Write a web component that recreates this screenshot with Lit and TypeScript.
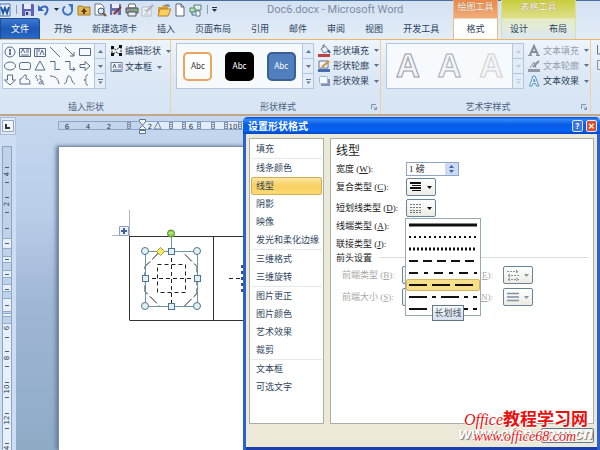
import { LitElement, html, svg, css } from "lit";
import { customElement } from "lit/decorators.js";
import { classMap } from "lit/directives/class-map.js";

const base = css`
  :host {
    display: block;
    box-sizing: border-box;
    font-family: "Noto Sans", "Noto Sans CJK SC", sans-serif;
    font-size: 9px;
    line-height: 12px;
    color: #2b3f5c;
  }
  * { box-sizing: border-box; }
  button {
    font: inherit;
    color: inherit;
    background: none;
    border: 0;
    padding: 0;
    margin: 0;
    white-space: nowrap;
  }
  svg { display: block; flex: none; }
`;

const arrow = html`<svg width="5" height="3" viewBox="0 0 5 3"><path d="M0 0h5L2.500 3z" fill="currentColor" /></svg>`;

/* ---------- title bar ---------- */

const quickIcons: Array<[string, unknown]> = [
  ["保存", svg`<path d="M1 1h11l1 1v11H1z" fill="#5b62b5"/><path d="M3 1h7v5H3z" fill="#e8ecfa"/><path d="M4 8h6v5H4z" fill="#c9cde6"/><path d="M5 9h2v3H5z" fill="#333a80"/>`],
  ["撤消", svg`<path d="M1 2v6h6z" fill="#3c68b8"/><path d="M3 6C6 2 11 3 10.500 7 10 9.500 9 11 7.500 12" fill="none" stroke="#3c68b8" stroke-width="2"/>`],
  ["重复", svg`<path d="M10.500 5A4.500 4.500 0 1 1 4 3.500" fill="none" stroke="#3b74c0" stroke-width="2"/><path d="M7 1h5v6z" fill="#3b74c0"/>`],
  ["文件夹", svg`<path d="M1 3h4l1 1h7v8H1z" fill="#e2b951" stroke="#a27c2a"/><path d="m7 5 3 4H8v2H6V9H4z" fill="#5a3d1c"/>`],
  ["打印预览", svg`<path d="M2 1h6l3 3v8H2z" fill="#fff" stroke="#66758c"/><circle cx="8" cy="8" r="3" fill="#d6e8f8" stroke="#4a5568"/><path d="m10 10 3 3" stroke="#7b4a28" stroke-width="2"/>`],
  ["另存为", svg`<path d="M1 1h11v11H1z" fill="#6a6fae"/><path d="M3 1h7v4H3z" fill="#eef"/><path d="M3 8h6v4H3z" fill="#d2c5cf"/><path d="m5 11 7-7" stroke="#7a3535" stroke-width="2"/>`],
  ["打印", svg`<path d="M4 1h6l1 4H3z" fill="#fff" stroke="#666"/><path d="M1 5h12v5H1z" fill="#8d949b" stroke="#555"/><path d="M3 9h8v4H3z" fill="#e6eef2" stroke="#555"/><path d="M9 7h3" stroke="#71c24f" stroke-width="2"/>`],
  ["编辑", svg`<path d="M1 4h9v9H1z" fill="#eef1f4" stroke="#b4bcc6"/><path d="m5 9 7-7" stroke="#a8b0ba" stroke-width="2"/><path d="M3 7h4M3 11h5" stroke="#bcc4ce"/>`],
  ["打开", svg`<path d="M1 4h4l1-2h5v10H1z" fill="#d9a13b"/><path d="M3 6h11l-3 7H1z" fill="#f7cf62" stroke="#b5802a"/><path d="M8 2h4v2" fill="none" stroke="#3973b8"/>`],
  ["新建", svg`<path d="M3 1h5l3 3v9H3z" fill="#fff" stroke="#56657c"/><path d="M8 1v3h3" fill="none" stroke="#56657c"/>`],
  ["更改形状", svg`<path d="M5 2h7v5H5z" fill="#dff0e2" stroke="#5a7a8c"/><path d="M1 5h5v4H1z" fill="#bfe0c2" stroke="#4b8a5a"/><path d="M7 8h4v5H7z" fill="#fff" stroke="#5a7a8c"/><path d="M3 9v3h3" fill="none" stroke="#44688a"/>`],
];

@customElement("word-titlebar")
class WordTitlebar extends LitElement {
  static styles = [base, css`
    :host { border-top: 1px solid #47719f; height: 18px; }
    .bar { display: flex; align-items: center; height: 17px; gap: 2px; }
    .quick { display: flex; align-items: center; gap: 2px; width: 265px; flex: none; }
    .quick button { display: flex; align-items: center; gap: 3px; color: #1d2e48; }
    .sep { width: 1px; height: 9px; background: #8a9db8; margin: 0 2px; }
    .custom { border-top: 1px solid #1d2e48; padding-top: 1px; }
    .title { margin: 0; font-family: Roboto, sans-serif; font-size: 11px; font-weight: 400; line-height: 14px; color: #7d8da4; white-space: nowrap; }
  `];
  render() {
    return html`<header class="bar">
      <div class="quick">
        <svg width="12" height="14" viewBox="0 0 12 14"><path d="M0 1h10v12H0z" fill="#e9f1fb" stroke="#4b77b4"/><path d="m1 4 2 6 2-5 2 5 2-6" fill="none" stroke="#1f55a5" stroke-width="2"/></svg>
        <span class="sep"></span>
        ${quickIcons.map(([name, art], i) => html`<button aria-label=${name}>
          <svg width="14" height="14" viewBox="0 0 14 14">${art}</svg>${i === 1 ? arrow : ""}</button>`)}
        <span class="sep"></span>
        <button class="custom" aria-label="自定义快速访问工具栏">${arrow}</button>
      </div>
      <h1 class="title">Doc6.docx - Microsoft Word</h1>
    </header>`;
  }
}

/* ---------- tab strip ---------- */

@customElement("word-tabs")
class WordTabs extends LitElement {
  static styles = [base, css`
    :host { height: 21px; margin-right: 24px; }
    .strip { display: flex; height: 21px; align-items: stretch; }
    .file { width: 40px; background: linear-gradient(#3d7ad2, #1d58b4 50%, #2a6bc8); color: #fff; border: 1px solid #1c4b98; border-bottom: 0; border-radius: 0 3px 0 0; }
    .main { display: flex; flex: 1; gap: 20px; padding-left: 14px; }
    .context { display: flex; position: relative; gap: 21px; justify-content: center; margin-top: -18px; padding-top: 18px; }
    .context .name { position: absolute; top: 0; left: 0; right: 0; height: 13px; text-align: center; color: #fff; text-shadow: 0 0 1px #8a5a20; line-height: 13px; }
    .draw { width: 45px; background: linear-gradient(#e98a4a, #f0ae7c 18px, #fff 19px); border: 1px solid #eab98c; border-width: 0 1px; margin-right: 3px; }
    .table { width: 75px; background: linear-gradient(#c8cc3c, #dfe08a 18px, #e6edc8 19px, #dbe7f2); border: 1px solid #dcdf9e; border-width: 0 1px; }
  `];
  render() {
    const tabs = ["开始", "新建选项卡", "插入", "页面布局", "引用", "邮件", "审阅", "视图", "开发工具"];
    return html`<nav class="strip">
      <button class="file">文件</button>
      <div class="main">${tabs.map((t) => html`<button>${t}</button>`)}</div>
      <div class="context draw"><span class="name">绘图工具</span><button>格式</button></div>
      <div class="context table"><span class="name">表格工具</span><button>设计</button><button>布局</button></div>
    </nav>`;
  }
}

/* ---------- ribbon ---------- */

const shapes = [
  svg`<circle cx="7" cy="7" r="5"/><path d="M7 4v6M6 5h2M6 9h2" stroke-width="1.500"/>`,
  svg`<path d="M1.500 3.500h11v8h-11z"/><path d="m3 8 2-4 2 4M8 5h3M8 7h3M3 10h8"/>`,
  svg`<path d="M1.500 3.500h11v8h-11zM4 4v7M6 4v3"/><path d="m7 10 2-5 2 5"/>`,
  svg`<path d="m2 2 10 10"/>`,
  svg`<path d="m2 2 9 9M11 7v4H7"/>`,
  svg`<path d="M1.500 3.500h11v7h-11z"/>`,
  svg`<ellipse cx="7" cy="7" rx="5.500" ry="4"/>`,
  svg`<rect x="1.500" y="3.500" width="11" height="7" rx="2"/>`,
  svg`<path d="m7 2 5 9H2z"/>`,
  svg`<path d="M2 2.500h5v8h5"/>`,
  svg`<path d="M2 2.500h5v8h5M10 8l2 2.500-2 2"/>`,
  svg`<path d="M2 5.500h5v-3l5 4.500-5 4.500v-3H2z"/>`,
  svg`<path d="M4.500 2h5v5h3L7 12 1.500 7h3z"/>`,
  svg`<path d="M2 11V6c4 0 2-4 6-4 1 3-1 3 0 4 3 0 4 1 4 5z"/>`,
  svg`<path d="M4 2c-4 3 3 3 0 6M6 3c6 0-2 3 2 4s1 4-1 4-1-3 2-2l2 3"/>`,
  svg`<path d="M2 3c6 0 8 3 9 8"/>`,
  svg`<path d="M1 11C5 10 3 3 6 3s2 7 6 8"/>`,
  svg`<path d="M10 2C7 2 8 4 8 5s0 2-2 2c2 0 2 1 2 2s-1 3 2 3"/>`,
];

@customElement("ribbon-scroll")
class RibbonScroll extends LitElement {
  static styles = [base, css`
    :host { width: 11px; flex: none; align-self: stretch; border-left: 1px solid #b3c6df; color: #5d7391; }
    :host([faint]) { color: #c0ccda; }
    .col { display: flex; flex-direction: column; height: 100%; }
    button { flex: 1; display: flex; align-items: center; justify-content: center; background: #e3edf8; border-bottom: 1px solid #b3c6df; }
    button:last-child { border-bottom: 0; }
    .up svg { rotate: 180deg; }
    .more svg { border-top: 1px solid currentColor; height: 5px; }
  `];
  render() {
    return html`<div class="col">
      <button class="up" aria-label="上一行">${arrow}</button>
      <button class="down" aria-label="下一行">${arrow}</button>
      <button class="more" aria-label="其他"><svg width="5" height="5" viewBox="0 -2 5 5"><path d="M0 0h5L2.500 3z" fill="currentColor"/></svg></button>
    </div>`;
  }
}

type Cmd = { label: string; icon: unknown; off?: boolean };

const editCmds: Cmd[] = [
  { label: "编辑形状", icon: svg`<path d="M2 3.500 6 6l5-4v9L6 8l-4 3z" fill="none" stroke="#222" stroke-dasharray="2 1"/><path d="M1 2h3v3H1zM9 1h3v3H9zM1 9h3v3H1zM9 9h3v3H9z" fill="#111"/>` },
  { label: "文本框", icon: svg`<path d="M1 2.500h11v9H1z" fill="#eef4fb" stroke="#6b7e98"/><path d="m3 8 1.500-4L6 8M8 5h3M8 7h3M3 10h8" fill="none" stroke="#4a5f80"/>` },
];
const styleCmds: Cmd[] = [
  { label: "形状填充", icon: svg`<path d="m3 5 4-3 4 5-5 2z" fill="#eef2f8" stroke="#66768f"/><path d="M5 4V1h2" fill="none" stroke="#66768f"/><path d="m10 6 2 3" stroke="#2d5ea8" stroke-width="2"/><path d="M0 10h12v3H0z" fill="#c0403c"/>` },
  { label: "形状轮廓", icon: svg`<path d="M1 2h9v7H1z" fill="#f4f7fb" stroke="#66768f"/><path d="m4 8 7-6" stroke="#d88b30" stroke-width="2"/><path d="M0 10h12v3H0z" fill="#456fae"/>` },
  { label: "形状效果", icon: svg`<path d="M3 5h9v7H3z" fill="#8293b5"/><rect x="1.500" y="2.500" width="8" height="7" rx="1" fill="#f5f8fc" stroke="#a5b6d0"/>` },
];
const textCmds: Cmd[] = [
  { label: "文本填充", off: true, icon: svg`<path d="m2 11 4-9 4 9M3 8h6" fill="none" stroke="#8490a0" stroke-width="2"/><path d="M0 11.500h4m4 0h4" stroke="#8490a0"/>` },
  { label: "文本轮廓", off: true, icon: svg`<path d="m2 9 4-6 2 6" fill="none" stroke="#8f99a6"/><path d="m5 8 6-6" stroke="#858f9c" stroke-width="2"/><path d="M0 10h12v3H0z" fill="#8f99a6"/>` },
  { label: "文本效果", icon: svg`<path d="m1.500 12 3.500-10h2L11 12H8.500l-.8-2.500H5L4 12zM5.500 7.500h1.600L6.300 5z" fill="#e4f2fc" stroke="#5793c4"/>` },
];

@customElement("word-ribbon")
class WordRibbon extends LitElement {
  static styles = [base, css`
    :host { height: 77px; border-top: 1px solid #eab66c; border-bottom: 2px solid #c3a58a; background: linear-gradient(#eef4fb, #dce8f5 50%, #d6e4f4); overflow: hidden; }
    .row { display: flex; height: 100%; }
    .group { display: flex; flex-direction: column; flex: none; border-right: 1px solid #efcf9f; padding: 3px 0 0 2px; height: 100%; }
    .insert { width: 171px; }
    .styles, .art { width: 210px; padding-left: 5px; }
    .tools { display: flex; height: 46px; }
    .gallery { display: flex; border: 1px solid #b3c6df; background: #f7fafd; flex: none; height: 46px; }
    .shapes { display: grid; grid-template-columns: repeat(6, 15px); grid-template-rows: repeat(3, 14px); width: 91px; padding-top: 1px; }
    .shapes svg { fill: none; stroke: #566a86; }
    .swatches { display: flex; align-items: center; justify-content: space-around; width: 125px; }
    .swatch { width: 29px; height: 29px; border-radius: 5px; border: 2px solid #000; background: #000; color: #fff; font-size: 8px; line-height: 20px; text-align: center; }
    .orange { border-color: #eda45e; background: #fff; color: #333; }
    .blue { border-color: #3a5f92; background: #4f7fbd; }
    .letter { font-family: "Liberation Sans", sans-serif; font-weight: 700; font-size: 33px; line-height: 40px; color: #f4f4f6; -webkit-text-stroke: 1px #949cab; }
    .l2 { -webkit-text-stroke-color: #a6adba; }
    .l3 { -webkit-text-stroke-color: #cfd1d6; }
    .cmds { display: flex; flex-direction: column; padding-left: 4px; }
    .cmd { display: flex; align-items: center; height: 16px; gap: 2px; }
    .cmd > svg:last-child { margin-left: 3px; color: #5d7391; }
    .off { color: #93a0b2; }
    .foot { display: flex; flex: 1; align-items: center; justify-content: center; position: relative; padding-top: 10px; color: #4d607d; }
    .launch { position: absolute; right: 3px; bottom: 4px; }
    .rest { display: flex; flex-direction: column; gap: 5px; padding: 5px 0 0 5px; flex: 1; }
  `];
  cmds(list: Cmd[]) {
    return html`<div class="cmds">${list.map((c) => html`<button class=${classMap({ cmd: true, off: !!c.off })} ?disabled=${c.off}>
      <svg width="13" height="14" viewBox="0 0 13 14">${c.icon}</svg><span>${c.label}</span>${arrow}</button>`)}</div>`;
  }
  foot(name: string, launch = true) {
    return html`<div class="foot"><span>${name}</span>${launch ? html`<button class="launch" aria-label=${name + "选项"}>
      <svg width="6" height="6" viewBox="0 0 6 6"><path d="M.5 5V.5H5M2.500 2.500 5.500 5.500M5.500 3v2.500H3" fill="none" stroke="#7f93ae"/></svg></button>` : ""}</div>`;
  }
  render() {
    return html`<div class="row">
      <section class="group insert">
        <div class="tools">
          <div class="gallery"><div class="shapes">${shapes.map((s) => html`<svg width="14" height="14" viewBox="0 0 14 14">${s}</svg>`)}</div><ribbon-scroll></ribbon-scroll></div>
          ${this.cmds(editCmds)}
        </div>
        ${this.foot("插入形状", false)}
      </section>
      <section class="group styles">
        <div class="tools">
          <div class="gallery"><div class="swatches">
            <button class="swatch orange">Abc</button><button class="swatch">Abc</button><button class="swatch blue">Abc</button>
          </div><ribbon-scroll></ribbon-scroll></div>
          ${this.cmds(styleCmds)}
        </div>
        ${this.foot("形状样式")}
      </section>
      <section class="group art">
        <div class="tools">
          <div class="gallery"><div class="swatches">
            <span class="letter">A</span><span class="letter l2">A</span><span class="letter l3">A</span>
          </div><ribbon-scroll faint></ribbon-scroll></div>
          ${this.cmds(textCmds)}
        </div>
        ${this.foot("艺术字样式")}
      </section>
      <div class="rest">
        <svg width="12" height="10" viewBox="0 0 12 10"><path d="M1.500 0v9H12M4 6h8" fill="none" stroke="#5d7391"/></svg>
        <svg width="12" height="10" viewBox="0 0 12 10"><path d="M1.500.5H12M1.500.5v9H12M4 5h8" fill="none" stroke="#8594aa"/></svg>
      </div>
    </div>`;
  }
}

/* ---------- document area ---------- */

@customElement("word-document")
class WordDocument extends LitElement {
  static styles = [base, css`
    :host { flex: 1; min-height: 0; overflow: hidden; background: linear-gradient(#c6d8ef, #b9cde8 30%, #a0b7d6 55%, #8eabc6); }
    .frame { display: grid; grid-template-columns: 16px 42px 1fr; grid-template-rows: 30px 1fr; height: 100%; }
    .side { background: #cdddf2; overflow: hidden; }
    .corner { display: flex; align-items: center; justify-content: center; width: 16px; height: 18px; margin-top: 1px; border: 1px solid #a9bdd8; background: #dfe9f6; }
    .page { background: #fff; border: 1px solid #7d8da5; border-width: 1px 0 0 1px; box-shadow: -2px 0 4px #63789a; overflow: hidden; }
    text { font-family: "DejaVu Sans", sans-serif; font-size: 7px; fill: #28364d; text-anchor: middle; }
  `];
  render() {
    const marks = [129, 171, 184, 199, 213, 226, 240];
    const hnum: Array<[number, string]> = [[67, "6"], [88, "4"], [109, "2"], [150, "2"], [191, "6"], [233, "10"]];
    const vnum: Array<[number, string]> = [[174, "4"], [204, "2"], [328, "6"], [358, "8"], [389, "10"], [420, "12"], [450, "14"]];
    const ticks = [167, 182, 197, 212, 228, 243, 259, 274, 289, 305, 337, 351, 366, 382, 397, 413, 428, 443];
    const boxes: Array<[number, number]> = [[238, 11], [256, 7], [270, 8], [284, 8], [298, 14], [313, 4], [323, 130]];
    const round: Array<[number, number]> = [[145, 251], [197, 251], [145, 306], [197, 306]];
    const square: Array<[number, number]> = [[171, 251], [145, 278], [197, 278], [171, 306]];
    return html`<div class="frame">
      <div class="side"><div class="corner"><svg width="12" height="12" viewBox="0 0 12 12"><path d="M.5.5h11v11H.5z" fill="#f2f6fb" stroke="#93a8c6"/><path d="M4 4v4h4" fill="none" stroke="#333" stroke-width="2"/></svg></div></div>
      <div></div>
      <svg width="190" height="30" viewBox="58 116 190 30">
        <path d="M58.500 121.500h190v8h-190z" fill="#c3d5ec" stroke="#8ba3c4"/>
        <path d="M143 122h105v7H143z" fill="#e3edf9"/>
        ${marks.map((x) => svg`<path d=${`M${x - 2} 122.500h4M${x - 2} 124.500h4M${x - 2} 126.500h4M${x - 2} 128.500h4M${x - 1.5} 122v7M${x + 1.5} 122v7`} stroke="#7f91ac"/>`)}
        ${hnum.map(([x, t]) => svg`<text x=${x} y="128.500">${t}</text>`)}
        <path d="m158 122-4 7h7z" fill="#e5ebf4" stroke="#7385a2"/>
        <path d="M139.500 119.500h6v2l-3 4-3-4zM139.500 129.500v-1l3-3 3 3v1zM139.500 130.500h6v3h-6z" fill="#f4f7fb" stroke="#60728f"/>
      </svg>
      <div class="side"><svg width="16" height="310" viewBox="0 146 16 310">
        <path d="M2.500 146.500h9v310h-9z" fill="#c0d2ea" stroke="#8ba3c4"/>
        ${boxes.map(([y, h]) => svg`<rect x="3" y=${y} width="8" height=${h} fill="#e6effa"/><path d=${`M2 ${y + 0.5}h10M2 ${y + h - 0.5}h10`} stroke="#94abc8"/>`)}
        ${ticks.map((y) => svg`<path d=${`M5 ${y + 0.5}h4`} stroke="#4c5d78"/>`)}
        ${vnum.map(([y, t]) => svg`<text transform=${`translate(9 ${y}) rotate(-90)`}>${t}</text>`)}
      </svg></div>
      <div></div>
      <main class="page"><svg width="190" height="220" viewBox="59 147 190 220" fill="none">
        <path d="M129.500 210v26M112 235.500h17" stroke="#aeb4bc"/>
        <path d="M119.500 226.500h9v9h-9z" fill="#eef3fb" stroke="#8ba0c4"/><path d="M124 228v6M121 231h6" stroke="#3d5f9c" stroke-width="2"/>
        <path d="M129.500 236.500h120M129.500 236v84M213.500 236v84M129.500 320.500h120" stroke="#333"/>
        <path d="M160 251.500h22l15 15v27l-13 13h-24l-15-15v-25z" stroke="#222" stroke-dasharray="10 3"/>
        <path d="M171.500 251v55M145 278.500h52M157.500 264.500h28v28h-28zM229 278.500h20" stroke="#222" stroke-dasharray="4 3"/>
        <path d="M242 265v28" stroke="#3a4f7c" stroke-width="2" stroke-dasharray="3 3"/>
        <path d="M145.500 251.500h52v55h-52zM171.500 235v16" stroke="#6f93a4"/>
        ${round.map(([x, y]) => svg`<circle cx=${x} cy=${y} r="3.500" fill="#e0f2f8" stroke="#527689"/>`)}
        ${square.map(([x, y]) => svg`<rect x=${x - 2.5} y=${y - 2.5} width="6" height="6" fill="#dff0f8" stroke="#527689"/>`)}
        <path d="m160.500 247.500 4 4-4 4-4-4z" fill="#f6ec6a" stroke="#a79b2c"/>
        <circle cx="171" cy="233.500" r="3.500" fill="#8fd04e" stroke="#588c2a"/><path d="M169 233h4" stroke="#d9f4bd"/>
      </svg></main>
    </div>`;
  }
}

/* ---------- format dialog ---------- */

@customElement("format-dialog")
class FormatDialog extends LitElement {
  static styles = [base, css`
    :host { display: flex; flex-direction: column; background: #2b62d0; border-radius: 5px 5px 0 0; overflow: hidden; color: #222; }
    .caption { display: flex; align-items: center; gap: 3px; height: 17px; padding: 0 3px 0 5px; background: linear-gradient(#0b4fd0, #2f86f8 15%, #0a5be6 45%, #0462f4 80%, #0246c0); }
    .caption h2 { flex: 1; margin: 0; color: #fff; font-size: 10px; font-weight: 700; }
    .win { width: 11px; height: 12px; border: 1px solid #dce8fc; border-radius: 2px; background: #3d74e4; color: #fff; font-weight: 700; font-size: 8px; line-height: 9px; }
    .close { background: #d9502e; }
    .body { flex: 1; min-height: 0; display: flex; gap: 6px; margin: 0 3px; padding: 4px 3px 0; background: #ece9d8; }
    .nav, .panel { background: #fff; border: 1px solid #a7b0a4; }
    .nav { width: 75px; flex: none; display: flex; flex-direction: column; padding: 1px; }
    .nav button { height: 18px; text-align: left; padding-left: 5px; color: #2f4560; flex: none; border-radius: 2px; }
    .nav hr { width: 100%; height: 1px; border: 0; margin: 0; background: #e4e8ec; flex: none; }
    .nav .on { background: linear-gradient(#fce7a3, #f9d063 45%, #fbda72); border: 1px solid #d2ad55; padding-left: 4px; }
    .panel { flex: 1; min-width: 0; padding: 0 5px; font-family: "Liberation Serif", "Noto Sans CJK SC", serif; }
    h3 { margin: 0; font-size: 12px; font-weight: 400; line-height: 24px; height: 21px; }
    .field { display: grid; grid-template-columns: 70px 30px 1fr; align-items: center; height: 18px; position: relative; }
    .gap { margin-top: 3px; }
    .field label { white-space: nowrap; }
    .spin { display: flex; width: 53px; height: 14px; border: 1px solid #8ea5c4; background: #fff; }
    .spin input { width: 38px; border: 0; padding: 0 2px; font: inherit; color: #222; outline: 0; background: none; }
    .steps { display: flex; flex-direction: column; justify-content: center; align-items: center; gap: 2px; flex: 1; background: #cbdaf6; color: #3f62a8; }
    .steps button { display: block; height: 3px; }
    .up { rotate: 180deg; }
    .combo { display: flex; align-items: center; justify-content: center; gap: 5px; width: 30px; height: 18px; border: 1px solid #66859a; border-radius: 2px; background: linear-gradient(#fff, #ecece4); color: #111; }
    .combo:disabled { color: #8b949c; }
    .legend { display: flex; align-items: center; gap: 8px; height: 9px; }
    .legend::after { content: ""; flex: 1; height: 1px; background: #dcdad4; }
    .sub { grid-template-columns: 60px 30px 71px 30px; padding-left: 6px; margin-top: 4px; color: #aaa9a4; }
    .sub label + button + label { text-align: right; padding-right: 10px; }
    .menu { position: absolute; z-index: 2; left: 69px; top: 19px; width: 76px; padding: 0; border: 1px solid #98a7b0; background: #fff; margin: 0; }
    .menu button { display: flex; align-items: center; justify-content: center; width: 100%; height: 12px; }
    .menu .on { background: #f8e08a; border: 1px solid #d6b65c; border-radius: 2px; }
    .tip { position: absolute; left: 26px; top: 86px; width: 32px; height: 16px; border: 1px solid #66758c; background: linear-gradient(#f6f9fd, #d5e0f0); color: #4b5563; text-align: center; line-height: 14px; font-family: "Noto Sans CJK SC", sans-serif; }
    .foot { display: flex; justify-content: flex-end; height: 26px; border-bottom: 3px solid #1c3fae; margin: 0 3px; padding: 4px 3px 0; background: #ece9d8; flex: none; }
    .foot button { width: 53px; height: 15px; border: 1px solid #5d7a94; border-radius: 2px; background: #f2f1ea; }
  `];
  combo(name: string, art: unknown, off = false) {
    return html`<button class="combo" id=${name} ?disabled=${off} aria-haspopup="listbox"><svg width="12" height="12" viewBox="0 0 12 12" fill="none" stroke="currentColor">${art}</svg>${arrow}</button>`;
  }
  render() {
    const groups = [["填充"], ["线条颜色", "线型", "阴影", "映像", "发光和柔化边缘"], ["三维格式", "三维旋转"], ["图片更正", "图片颜色", "艺术效果", "裁剪"], ["文本框", "可选文字"]];
    const dashes: Array<[string, string, number]> = [
      ["实线", "none", 3], ["圆点", "2 3", 2], ["方点", "2 2", 3], ["短划线", "9 5", 2], ["划线-点", "9 6 4 6", 2],
      ["长划线", "18 5", 2], ["长划线-点", "18 5 4 5", 2], ["长划线-点-点", "18 5 4 5 4 5", 2]];
    const compound = svg`<path d="M0 2h11M0 7h11" stroke-width="2"/><path d="M2 4.500h9M2 9.500h9"/>`;
    const dashed = svg`<path d="M0 2.500h12M0 5.500h12M0 8.500h12M0 10.500h12" stroke="#68727d" stroke-dasharray="2 1"/>`;
    const ends = svg`<path d="M0 2.500h10M1 6.500h11M1 10.500h11" stroke-dasharray="2 1"/><path d="m9 1 2 1.500L9 4M3 5 1 6.500 3 8M3 9l-2 1.500L3 12M9 9l2 1.500L9 12"/>`;
    const bars = svg`<path d="M0 2.500h12M0 6h12M0 9.500h12" stroke="#8091a5" stroke-width="1.500"/>`;
    return html`
      <header class="caption"><h2>设置形状格式</h2><button class="win" aria-label="帮助">?</button><button class="win close" aria-label="关闭窗口">✕</button></header>
      <div class="body">
        <nav class="nav">${groups.map((g, i) => html`${i ? html`<hr />` : ""}${g.map((n) => html`<button class=${classMap({ on: n === "线型" })}>${n}</button>`)}`)}</nav>
        <section class="panel">
          <h3>线型</h3>
          <div class="field"><label for="width">宽度 (<u>W</u>):</label>
            <span class="spin"><input id="width" value="1 磅" /><span class="steps"><button class="up" aria-label="增加">${arrow}</button><button aria-label="减少">${arrow}</button></span></span></div>
          <div class="field"><label for="compound">复合类型 (<u>C</u>):</label>${this.combo("compound", compound)}</div>
          <div class="field gap"><label for="dash">短划线类型 (<u>D</u>):</label>${this.combo("dash", dashed)}
            <div class="menu">${dashes.map(([n, d, w]) => html`<button aria-label=${n} class=${classMap({ on: n === "长划线" })}>
              <svg width="68" height="4" viewBox="0 0 68 4"><path d="M0 2h68" stroke="#111" stroke-width=${w} stroke-dasharray=${d}/></svg></button>`)}
              <span class="tip" role="tooltip">长划线</span></div></div>
          <div class="field"><label>线端类型 (<u>A</u>):</label></div>
          <div class="field"><label>联接类型 (<u>J</u>):</label></div>
          <div class="legend">前头设置</div>
          <div class="field sub"><label for="bt">前端类型 (<u>B</u>):</label>${this.combo("bt", ends, true)}<label for="et">(<u>E</u>):</label>${this.combo("et", ends, true)}</div>
          <div class="field sub"><label for="bs">前端大小 (<u>S</u>):</label>${this.combo("bs", bars, true)}<label for="es">(<u>N</u>):</label>${this.combo("es", bars, true)}</div>
        </section>
      </div>
      <footer class="foot"><button aria-label="关闭"></button></footer>`;
  }
}

/* ---------- page ---------- */

@customElement("app-root")
class AppRoot extends LitElement {
  static styles = [base, css`
    :host { display: flex; flex-direction: column; position: relative; height: 100vh; overflow: hidden; background: linear-gradient(#d3e1f2, #e3edf8 38px); }
    .dialog { position: absolute; left: 243px; right: 0; top: 117px; bottom: 0; }
    .mark { position: absolute; right: 12px; bottom: 5px; text-align: right; color: #e8110f; font-family: "Liberation Serif", "Noto Sans CJK SC", serif; font-style: italic; font-size: 16px; line-height: 17px; white-space: nowrap; text-shadow: 1px 0 #fff, -1px 0 #fff, 0 1px #fff, 0 -1px #fff; }
    .mark b { font-style: normal; font-size: 17px; }
    .mark a { display: block; color: inherit; text-decoration: none; font-size: 14px; padding-right: 12px; }
    .ghost { position: absolute; right: 7px; bottom: 8px; color: #fff; font: italic 700 16px/17px "Liberation Sans", sans-serif; text-shadow: 1px 1px 1px #777; }
  `];
  render() {
    return html`
      <word-titlebar></word-titlebar>
      <word-tabs></word-tabs>
      <word-ribbon></word-ribbon>
      <word-document></word-document>
      <format-dialog class="dialog"></format-dialog>
      <span class="ghost">www.cfan.com.cn</span>
      <div class="mark">Office<b>教程学习网</b><a href="#">www.office68.com</a></div>`;
  }
}
